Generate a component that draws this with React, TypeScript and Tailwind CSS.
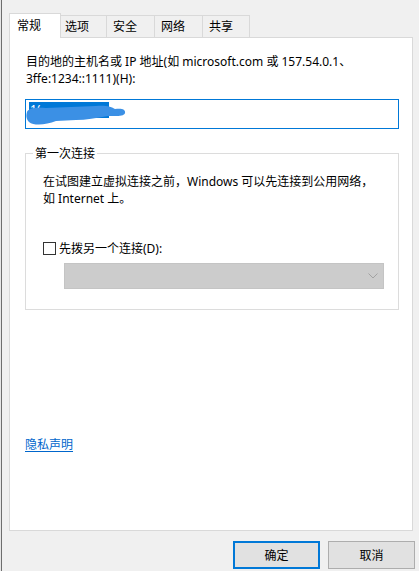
import React from "react";

const font = { fontFamily: '"Noto Sans", "Noto Sans CJK SC", sans-serif' };

export default function App() {
  return (
    <div
      className="w-[419px] h-[571px] bg-[#f0f0f0] flex text-[12px] leading-[17px] text-black overflow-hidden"
      style={font}
    >
      <div className="w-[3px] h-full flex">
        <div className="w-[1px] h-full bg-[#e6e6e6]" />
        <div className="w-[1px] h-full bg-[#6e6e6e]" />
      </div>
      <div className="flex-1 flex flex-col pl-[6px] pr-[4px] pt-[13px]">
        {/* tabs */}
        <div className="flex items-end h-[24px]">
          <div className="w-[52px] h-[25px] -mb-px relative z-10 bg-white border border-b-0 border-[#d9d9d9] pl-[7px] pt-[3px]">
            常规
          </div>
          <div className="w-[46px] h-[22px] border-t border-r border-[#d9d9d9] pl-[4px] pt-[2px]">
            选项
          </div>
          <div className="w-[48px] h-[22px] border-t border-r border-[#d9d9d9] pl-[6px] pt-[2px]">
            安全
          </div>
          <div className="w-[48px] h-[22px] border-t border-r border-[#d9d9d9] pl-[6px] pt-[2px]">
            网络
          </div>
          <div className="w-[47px] h-[22px] border-t border-r border-[#d9d9d9] pl-[6px] pt-[2px]">
            共享
          </div>
        </div>
        {/* panel */}
        <div className="mr-[2px] h-[494px] bg-white border border-[#d9d9d9] pl-[15px] pr-[12px] pt-[15px] flex flex-col">
          <div className="pl-[1px]">
            目的地的主机名或 IP 地址(如 microsoft.com 或 157.54.0.1、
            <br />
            3ffe:1234::1111)(H):
          </div>
          <div className="mt-[12px] h-[30px] w-[374px] border border-[#0078d7] relative">
            <div className="absolute left-[3px] top-[2px] w-[80px] h-[16px] bg-[#0078d7] text-white leading-[16px] pl-[1px]">
              1(
            </div>
            <svg className="absolute left-0 top-0" width="120" height="28" viewBox="0 0 120 28">
              <path
                d="M 1 12 C 2 8, 10 7, 20 8 L 70 6 C 80 5, 86 7, 89 9 C 95 8, 100 9, 99 13 C 98 17, 88 16, 82 16 C 70 18, 60 20, 50 20 L 30 21 C 20 25, 8 26, 3 22 C 0 19, 0 15, 1 12 Z"
                fill="#3b90e5"
              />
            </svg>
          </div>
          {/* group box */}
          <div className="mt-[24px] w-[374px] h-[157px] border border-[#dcdcdc] relative pl-[17px] pt-[19px]">
            <div className="absolute left-[7px] top-[-9px] bg-white px-[2px]">第一次连接</div>
            <div>
              在试图建立虚拟连接之前，Windows 可以先连接到公用网络，
              <br />
              如 Internet 上。
            </div>
            <div className="mt-[33px] flex items-center h-[17px]">
              <div className="w-[13px] h-[13px] border border-[#333333] bg-white" />
              <span className="ml-[3px]">先拨另一个连接(D):</span>
            </div>
            <div className="mt-[6px] ml-[21px] w-[320px] h-[26px] bg-[#cccccc] border border-[#c4c4c4] flex items-center justify-end pr-[5px]">
              <svg width="10" height="6" viewBox="0 0 10 6">
                <path d="M0.5 0.5 L5 5 L9.5 0.5" stroke="#a2a2a2" strokeWidth="1" fill="none" />
              </svg>
            </div>
          </div>
          <div className="mt-[126px]">
            <span className="text-[#0066cc] underline underline-offset-2">隐私声明</span>
          </div>
        </div>
        {/* buttons */}
        <div className="mt-[10px] flex justify-end gap-[8px]">
          <div className="w-[87px] h-[28px] bg-[#e1e1e1] border-2 border-[#0078d7] flex items-center justify-center">
            确定
          </div>
          <div className="w-[87px] h-[28px] bg-[#e1e1e1] border border-[#adadad] flex items-center justify-center">
            取消
          </div>
        </div>
      </div>
    </div>
  );
}
